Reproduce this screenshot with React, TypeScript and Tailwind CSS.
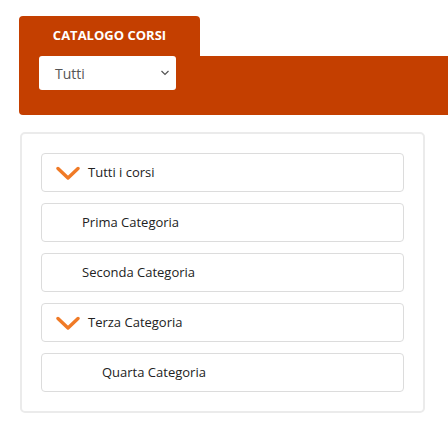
import React from 'react';

const font = { fontFamily: '"Open Sans", "Liberation Sans", sans-serif' };

function Chevron() {
  return (
    <svg width="24" height="14" viewBox="0 0 24 14" className="shrink-0">
      <polyline points="2,2.5 12,12 22,2.5" fill="none" stroke="#f07a26" strokeWidth="3.4" strokeLinecap="round" strokeLinejoin="round" />
    </svg>
  );
}

const rows = [
  { label: 'Tutti i corsi', open: true, pad: 'pl-[14px]' },
  { label: 'Prima Categoria', open: false, pad: 'pl-[40px]' },
  { label: 'Seconda Categoria', open: false, pad: 'pl-[40px]' },
  { label: 'Terza Categoria', open: true, pad: 'pl-[14px]' },
  { label: 'Quarta Categoria', open: false, pad: 'pl-[60px]' },
];

export default function App() {
  return (
    <div className="w-[448px] h-[441px] bg-white pt-[16px]" style={font}>
      {/* header tab + bar */}
      <div className="pl-[19px]">
        <div className="w-[181px] h-[40px] rounded-t-[4px] bg-[#c43f00] flex items-center justify-center">
          <span className="text-white text-[13px] font-bold">CATALOGO CORSI</span>
        </div>
        <div className="h-[59px] rounded-bl-[4px] bg-[#c43f00] pl-[20px]">
          <div className="w-[137px] h-[34px] rounded-[3px] bg-white flex items-center justify-between pl-[16px] pr-[6px]">
            <span className="text-[14px] text-[#555]">Tutti</span>
            <svg width="10" height="6" viewBox="0 0 10 6">
              <polyline points="1.5,1 5,4.5 8.5,1" fill="none" stroke="#555" strokeWidth="1.2" />
            </svg>
          </div>
        </div>
      </div>

      {/* category list */}
      <div className="mt-[17px] ml-[20px] w-[405px] border-2 border-[#ebebeb] rounded-[5px] p-[19px] flex flex-col gap-[11px]">
        {rows.map((r) => (
          <div
            key={r.label}
            className={`h-[39px] border border-[#dcdcdc] rounded-[4px] flex items-center ${r.pad}`}
          >
            {r.open && <Chevron />}
            <span className={`text-[13px] text-[#222] ${r.open ? 'ml-[8px]' : ''}`}>{r.label}</span>
          </div>
        ))}
      </div>
    </div>
  );
}
